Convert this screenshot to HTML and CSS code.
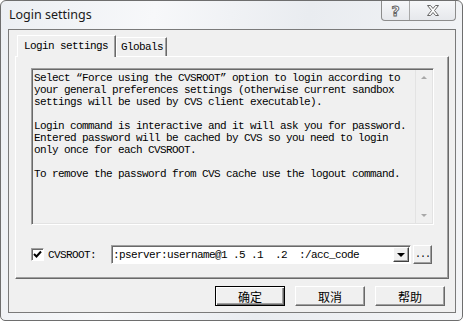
FILE: index.html
```html
<!DOCTYPE html>
<html>
<head>
<meta charset="utf-8">
<link rel="stylesheet" href="styles.css">
</head>
<body>
<div class="window">
  <div class="titlebar">
    <span class="title">Login settings</span>
    <div class="caption">
      <span class="cap help">?</span>
      <span class="cap close">
        <svg width="14" height="11" viewBox="0 0 14 11"><polygon points="1.5,0.5 4.5,0.5 7,3.5 9.5,0.5 12.5,0.5 8.5,5.5 12.5,10.5 9.5,10.5 7,7.5 4.5,10.5 1.5,10.5 5.5,5.5" fill="#fff" stroke="#666" stroke-width="1"/></svg>
      </span>
    </div>
  </div>
  <div class="client">
    <div class="tabs">
      <span class="tab active">Login settings</span>
      <span class="tab">Globals</span>
    </div>
    <div class="panel">
      <div class="textbox">
        <div class="text">Select “Force using the CVSROOT” option to login according to
your general preferences settings (otherwise current sandbox
settings will be used by CVS client executable).

Login command is interactive and it will ask you for password.
Entered password will be cached by CVS so you need to login
only once for each CVSROOT.

To remove the password from CVS cache use the logout command.</div>
        <div class="scrollbar">
          <span class="arrow up"></span>
          <span class="arrow down"></span>
        </div>
      </div>
      <div class="rootrow">
        <span class="check">
          <svg width="9" height="9" viewBox="0 0 9 9"><path d="M1 4 L3.5 6.5 L8 1.5" fill="none" stroke="#000" stroke-width="2"/></svg>
        </span>
        <span class="rootlabel">CVSROOT:</span>
        <div class="combo">
          <span class="combotext">:pserver:username@1 .5 .1  .2  :/acc_code</span>
          <span class="dropbtn"><span class="tri"></span></span>
        </div>
        <span class="dots">...</span>
      </div>
    </div>
    <div class="buttons">
      <span class="btn default">确定</span>
      <span class="btn">取消</span>
      <span class="btn">帮助</span>
    </div>
  </div>
</div>
</body>
</html>
```

FILE: styles.css
```css
*, *::before, *::after {
  box-sizing: border-box;
}
html, body {
  margin: 0;
  padding: 0;
  background: #ffffff;
}
.window {
  width: 463px;
  height: 321px;
  border: 1px solid #6e6e6e;
  border-radius: 6px 6px 5px 5px;
  background: linear-gradient(100deg, #eceff3 0%, #f7f8fa 30%, #e9ecf0 60%, #f4f5f7 100%);
  display: flex;
  flex-direction: column;
}
.titlebar {
  height: 28px;
  flex: none;
  display: flex;
  align-items: flex-start;
}
.title {
  font-family: "Noto Sans", "Open Sans", sans-serif;
  font-size: 12.5px;
  color: #1a1a1a;
  margin: 5px 0 0 8px;
}
.caption {
  margin-left: auto;
  margin-right: 6px;
  display: flex;
  height: 20px;
  border: 1px solid #8c8c8c;
  border-top: none;
  border-radius: 0 0 4px 4px;
  background: linear-gradient(#f6f7f9, #e6e8ec);
}
.cap {
  display: flex;
  align-items: center;
  justify-content: center;
  height: 19px;
}
.help {
  width: 28px;
  border-right: 1px solid #a8a8a8;
  font-family: "DejaVu Sans", sans-serif;
  font-weight: bold;
  font-size: 14px;
  color: #fff;
  -webkit-text-stroke: 1px #666;
}
.close {
  width: 45px;
}
.client {
  margin: 0 6px 0 7px;
  height: 284px;
  flex: none;
  border: 1px solid #7a7a7a;
  background: #f0f0f0;
  padding: 5px 6px 0 6px;
  font-family: "Liberation Mono", monospace;
}
.tabs {
  display: flex;
  align-items: flex-end;
  height: 21px;
  padding-left: 2px;
}
.tab {
  font-size: 11px;
  letter-spacing: -0.6px;
  height: 19px;
  line-height: 18px;
  padding: 0 3px 0 4px;
  border-top: 1px solid #fff;
  border-left: 1px solid #fff;
  border-right: 1px solid #696969;
  box-shadow: inset -1px 0 0 #a0a0a0;
  color: #000;
}
.tab.active {
  height: 22px;
  line-height: 20px;
  padding: 0 7px 0 6px;
  background: #f0f0f0;
  position: relative;
  z-index: 1;
  margin-bottom: -1px;
}
.panel {
  height: 223px;
  border-top: 1px solid #fff;
  border-left: 1px solid #fff;
  border-right: 1px solid #696969;
  border-bottom: 1px solid #696969;
  box-shadow: inset -1px -1px 0 #a0a0a0;
  padding: 11px 14px 0 15px;
}
.textbox {
  height: 157px;
  border-top: 1px solid #a0a0a0;
  border-left: 1px solid #a0a0a0;
  border-right: 1px solid #fff;
  border-bottom: 1px solid #fff;
  box-shadow: inset 1px 1px 0 #696969, inset -1px -1px 0 #e3e3e3;
  display: flex;
}
.text {
  flex: 1;
  white-space: pre;
  font-size: 11px;
  letter-spacing: -0.6px;
  line-height: 12px;
  padding: 3px 0 0 2px;
  color: #000;
}
.scrollbar {
  width: 17px;
  margin: 1px 1px 1px 0;
  background: #f0f0f0;
  border-left: 1px solid #e3e3e3;
  display: flex;
  flex-direction: column;
  justify-content: space-between;
  align-items: center;
  padding: 6px 0;
}
.arrow {
  width: 0;
  height: 0;
  border-left: 3px solid transparent;
  border-right: 3px solid transparent;
}
.arrow.up { border-bottom: 3px solid #a8a8a8; }
.arrow.down { border-top: 3px solid #a8a8a8; }
.rootrow {
  display: flex;
  align-items: center;
  margin-top: 20px;
  height: 19px;
}
.check {
  width: 13px;
  height: 13px;
  border-top: 1px solid #a0a0a0;
  border-left: 1px solid #a0a0a0;
  border-right: 1px solid #fff;
  border-bottom: 1px solid #fff;
  box-shadow: inset 1px 1px 0 #696969;
  background: #fff;
  display: flex;
  align-items: center;
  justify-content: center;
}
.rootlabel {
  font-size: 11px;
  letter-spacing: -0.6px;
  margin-left: 4px;
  width: 63px;
}
.combo {
  width: 300px;
  height: 19px;
  border-top: 1px solid #a0a0a0;
  border-left: 1px solid #a0a0a0;
  border-right: 1px solid #fff;
  border-bottom: 1px solid #fff;
  box-shadow: inset 1px 1px 0 #696969;
  background: #fff;
  display: flex;
  align-items: center;
}
.combotext {
  flex: 1;
  white-space: pre;
  font-size: 11px;
  letter-spacing: -0.6px;
  padding-left: 1px;
}
.dropbtn {
  width: 16px;
  height: 15px;
  margin-right: 1px;
  border-top: 1px solid #fff;
  border-left: 1px solid #fff;
  border-right: 1px solid #404040;
  border-bottom: 1px solid #404040;
  box-shadow: inset -1px -1px 0 #a0a0a0;
  background: #f0f0f0;
  display: flex;
  align-items: center;
  justify-content: center;
}
.tri {
  width: 0;
  height: 0;
  border-left: 4px solid transparent;
  border-right: 4px solid transparent;
  border-top: 4px solid #000;
}
.dots {
  margin-left: 2px;
  width: 19px;
  height: 19px;
  border-top: 1px solid #fff;
  border-left: 1px solid #fff;
  border-right: 1px solid #696969;
  border-bottom: 1px solid #696969;
  box-shadow: inset -1px -1px 0 #a0a0a0;
  font-size: 10px;
  letter-spacing: -1px;
  display: flex;
  align-items: center;
  justify-content: center;
  line-height: 17px;
}
.buttons {
  display: flex;
  justify-content: flex-end;
  gap: 10px;
  margin-top: 7px;
  padding-right: 4px;
}
.btn {
  width: 70px;
  height: 20px;
  border-top: 1px solid #fff;
  border-left: 1px solid #fff;
  border-right: 1px solid #696969;
  border-bottom: 1px solid #696969;
  box-shadow: inset -1px -1px 0 #a0a0a0;
  font-family: "Noto Sans CJK SC", sans-serif;
  font-size: 12px;
  display: flex;
  align-items: center;
  justify-content: center;
  color: #000;
}
.btn.default {
  border: 1px solid #000;
  box-shadow: inset 1px 1px 0 #fff, inset -1px -1px 0 #696969, inset -2px -2px 0 #a0a0a0;
}
```
